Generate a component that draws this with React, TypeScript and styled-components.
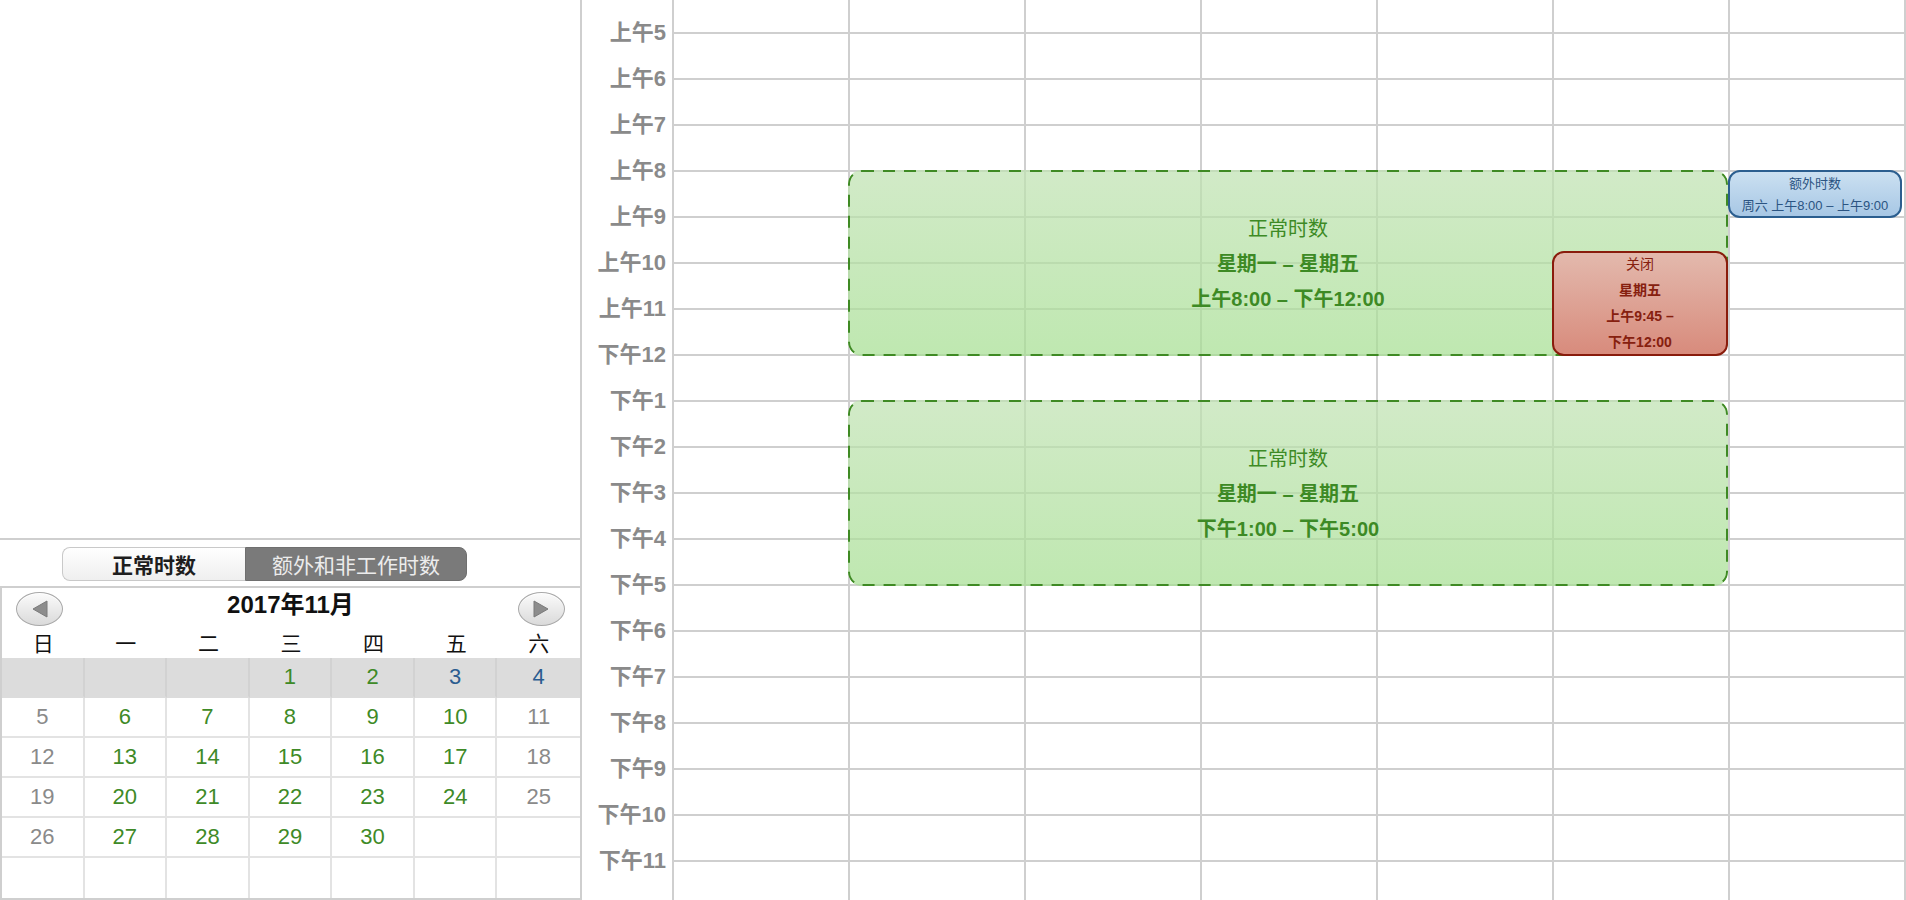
import React from "react";
import styled, { createGlobalStyle, css } from "styled-components";

const HOUR_H = 46;
const FIRST_LINE = 33;
const COL_W = 176;

const GlobalStyle = createGlobalStyle`
  html, body {
    margin: 0;
    padding: 0;
    background: #fff;
  }
  body {
    font-family: "Liberation Sans", "Noto Sans CJK SC", sans-serif;
    overflow: hidden;
  }
  * {
    box-sizing: border-box;
  }
`;

const hourLabels = [
  "上午5", "上午6", "上午7", "上午8", "上午9", "上午10", "上午11", "下午12",
  "下午1", "下午2", "下午3", "下午4", "下午5", "下午6", "下午7", "下午8",
  "下午9", "下午10", "下午11",
];

type DayTone = "off" | "work" | "extra";
type Day = { n?: number; tone?: DayTone };

const g = (n: number): Day => ({ n, tone: "work" });
const o = (n: number): Day => ({ n, tone: "off" });
const b = (n: number): Day => ({ n, tone: "extra" });
const e: Day = {};

const weeks: Day[][] = [
  [e, e, e, g(1), g(2), b(3), b(4)],
  [o(5), g(6), g(7), g(8), g(9), g(10), o(11)],
  [o(12), g(13), g(14), g(15), g(16), g(17), o(18)],
  [o(19), g(20), g(21), g(22), g(23), g(24), o(25)],
  [o(26), g(27), g(28), g(29), g(30), e, e],
  [e, e, e, e, e, e, e],
];

type Kind = "normal" | "closed" | "extra";
type CalEvent = {
  kind: Kind;
  day: number;
  span: number;
  from: number;
  to: number;
  lines: { text: string; bold?: boolean }[];
};

const events: CalEvent[] = [
  {
    kind: "normal",
    day: 1,
    span: 5,
    from: 8,
    to: 12,
    lines: [
      { text: "正常时数" },
      { text: "星期一 – 星期五", bold: true },
      { text: "上午8:00 – 下午12:00", bold: true },
    ],
  },
  {
    kind: "normal",
    day: 1,
    span: 5,
    from: 13,
    to: 17,
    lines: [
      { text: "正常时数" },
      { text: "星期一 – 星期五", bold: true },
      { text: "下午1:00 – 下午5:00", bold: true },
    ],
  },
  {
    kind: "closed",
    day: 5,
    span: 1,
    from: 9.75,
    to: 12,
    lines: [
      { text: "关闭" },
      { text: "星期五", bold: true },
      { text: "上午9:45 –", bold: true },
      { text: "下午12:00", bold: true },
    ],
  },
  {
    kind: "extra",
    day: 6,
    span: 1,
    from: 8,
    to: 9,
    lines: [{ text: "额外时数" }, { text: "周六 上午8:00 – 上午9:00" }],
  },
];

// ---------- left panel ----------

const Page = styled.div`
  display: flex;
  width: 1906px;
  height: 900px;
  overflow: hidden;
`;

const SidePanel = styled.div`
  width: 582px;
  flex-shrink: 0;
  display: flex;
  flex-direction: column;
  border-right: 2px solid #cfcfcf;
`;

const Blank = styled.div`
  flex: 1;
`;

const SwitchBar = styled.div`
  display: flex;
  border-top: 2px solid #cfcfcf;
  padding: 7px 0 5px 62px;
`;

const Segment = styled.div<{ $active?: boolean; $width: number }>`
  width: ${(p) => p.$width}px;
  height: 34px;
  display: flex;
  align-items: center;
  justify-content: center;
  font-size: 21px;
  ${(p) =>
    p.$active
      ? css`
          background: linear-gradient(#ffffff, #efefef);
          border: 1px solid #c9c9c9;
          border-right: none;
          border-radius: 8px 0 0 8px;
          color: #1e1e1e;
          font-weight: bold;
        `
      : css`
          background: #7a7a7a;
          border: 1px solid #6f6f6f;
          border-radius: 0 8px 8px 0;
          color: #ececec;
        `}
`;

const MiniCalendar = styled.div`
  border: 2px solid #cfcfcf;
  border-right: none;
`;

const CalHeader = styled.div`
  height: 38px;
  display: flex;
  align-items: flex-start;
  justify-content: space-between;
  padding: 4px 15px 0 14px;
`;

const CalTitle = styled.div`
  font-size: 24px;
  font-weight: bold;
  color: #111;
  line-height: 28px;
  margin-top: -1px;
`;

const NavButton = styled.div`
  width: 47px;
  height: 34px;
  border-radius: 50%;
  border: 1px solid #a8a8a8;
  background: linear-gradient(#fbfbfb, #dadada);
  box-shadow: inset 0 1px 0 #fff;
  display: flex;
  align-items: center;
  justify-content: center;
`;

const WeekHead = styled.div`
  height: 32px;
  display: grid;
  grid-template-columns: repeat(7, 1fr);
  align-items: center;
  text-align: center;
  font-size: 21px;
  color: #111;
`;

const DayGrid = styled.div`
  display: grid;
  grid-template-columns: repeat(7, 1fr);
  grid-auto-rows: 40px;
`;

const toneColor: Record<DayTone, string> = {
  off: "#8a8a8a",
  work: "#3e8a27",
  extra: "#2b5c90",
};

const DayCell = styled.div<{ $shaded?: boolean; $last?: boolean; $lastRow?: boolean; $tone?: DayTone }>`
  display: flex;
  align-items: center;
  justify-content: center;
  font-size: 22px;
  color: ${(p) => (p.$tone ? toneColor[p.$tone] : "#888")};
  background: ${(p) => (p.$shaded ? "#dcdcdc" : "#fff")};
  border-right: ${(p) => (p.$last ? "none" : `2px solid ${p.$shaded ? "#d2d2d2" : "#e3e3e3"}`)};
  border-bottom: ${(p) => (p.$lastRow ? "none" : `2px solid ${p.$shaded ? "#dcdcdc" : "#e3e3e3"}`)};
`;

// ---------- week grid ----------

const Schedule = styled.div`
  flex: 1;
  display: flex;
`;

const TimeColumn = styled.div`
  width: 92px;
  flex-shrink: 0;
  border-right: 2px solid #cfcfcf;
  padding-top: ${FIRST_LINE - HOUR_H / 2}px;
`;

const TimeLabel = styled.div`
  height: ${HOUR_H}px;
  line-height: ${HOUR_H}px;
  text-align: right;
  padding-right: 6px;
  font-size: 22px;
  font-weight: bold;
  color: #8a8a8a;
  white-space: nowrap;
`;

const DayArea = styled.div`
  flex: 1;
  display: flex;
  position: relative;
  overflow: hidden;
`;

const DayColumn = styled.div`
  width: ${COL_W}px;
  flex-shrink: 0;
  display: flex;
  flex-direction: column;
  border-right: 2px solid #cfcfcf;
`;

const HourCell = styled.div<{ $first?: boolean }>`
  height: ${(p) => (p.$first ? FIRST_LINE + 1 : HOUR_H)}px;
  flex-shrink: 0;
  border-bottom: 2px solid #cfcfcf;
`;

const kindStyles: Record<Kind, ReturnType<typeof css>> = {
  normal: css`
    background: linear-gradient(rgba(192, 226, 178, 0.72), rgba(166, 223, 146, 0.72));
    border-radius: 14px;
    color: #3d8a25;
    font-size: 20px;
    line-height: 35px;
    padding-top: 2px;
  `,
  closed: css`
    background: linear-gradient(#e3b9ad, #d88b7c);
    border: 2px solid #891c0c;
    border-radius: 12px;
    color: #86200f;
    font-size: 14px;
    line-height: 26px;
  `,
  extra: css`
    background: linear-gradient(#cbe0f1, #a7c7e5);
    border: 2px solid #2b5e8f;
    border-radius: 12px;
    color: #2b5482;
    font-size: 13px;
    line-height: 22px;
    padding-top: 2px;
  `,
};

const EventBlock = styled.div<{ $kind: Kind }>`
  position: absolute;
  display: flex;
  flex-direction: column;
  align-items: center;
  justify-content: center;
  text-align: center;
  white-space: nowrap;
  overflow: hidden;
  ${(p) => kindStyles[p.$kind]}
`;

const DashedOutline = styled.svg`
  position: absolute;
  inset: 0;
  pointer-events: none;
`;

const EventLine = styled.div<{ $bold?: boolean }>`
  position: relative;
  font-weight: ${(p) => (p.$bold ? "bold" : "normal")};
`;

const ArrowIcon: React.FC<{ dir: "left" | "right" }> = ({ dir }) => (
  <svg width="18" height="20" viewBox="0 0 18 20">
    <path
      d={dir === "left" ? "M2 10 L16 2 L16 18 Z" : "M16 10 L2 2 L2 18 Z"}
      fill="#8d8d8d"
      stroke="#7a7a7a"
      strokeWidth="1"
      strokeLinejoin="round"
    />
  </svg>
);

const lineY = (h: number) => FIRST_LINE + (h - 5) * HOUR_H;

const App: React.FC = () => {
  return (
    <Page>
      <GlobalStyle />
      <SidePanel>
        <Blank />
        <SwitchBar>
          <Segment $active $width={183}>正常时数</Segment>
          <Segment $width={222}>额外和非工作时数</Segment>
        </SwitchBar>
        <MiniCalendar>
          <CalHeader>
            <NavButton>
              <ArrowIcon dir="left" />
            </NavButton>
            <CalTitle>2017年11月</CalTitle>
            <NavButton>
              <ArrowIcon dir="right" />
            </NavButton>
          </CalHeader>
          <WeekHead>
            {["日", "一", "二", "三", "四", "五", "六"].map((d) => (
              <div key={d}>{d}</div>
            ))}
          </WeekHead>
          <DayGrid>
            {weeks.map((week, wi) =>
              week.map((day, di) => (
                <DayCell
                  key={`${wi}-${di}`}
                  $shaded={wi === 0}
                  $last={di === 6}
                  $lastRow={wi === weeks.length - 1}
                  $tone={day.tone}
                >
                  {day.n}
                </DayCell>
              ))
            )}
          </DayGrid>
        </MiniCalendar>
      </SidePanel>

      <Schedule>
        <TimeColumn>
          {hourLabels.map((l) => (
            <TimeLabel key={l}>{l}</TimeLabel>
          ))}
        </TimeColumn>
        <DayArea>
          {Array.from({ length: 7 }).map((_, c) => (
            <DayColumn key={c}>
              <HourCell $first />
              {Array.from({ length: 19 }).map((__, r) => (
                <HourCell key={r} />
              ))}
            </DayColumn>
          ))}
          {events.map((ev, i) => {
            const top = lineY(ev.from) - 1;
            const bottom = lineY(ev.to) + 1;
            const width = ev.kind === "extra" ? COL_W - 2 : COL_W * ev.span;
            const height = bottom - top;
            return (
              <EventBlock
                key={i}
                $kind={ev.kind}
                style={{ left: COL_W * ev.day - 2, top, width, height }}
              >
                {ev.kind === "normal" && (
                  <DashedOutline width={width} height={height}>
                    <rect
                      x="1"
                      y="1"
                      width={width - 2}
                      height={height - 2}
                      rx="13"
                      fill="none"
                      stroke="#3f8a24"
                      strokeWidth="2"
                      strokeDasharray="12 9"
                    />
                  </DashedOutline>
                )}
                {ev.lines.map((ln, j) => (
                  <EventLine key={j} $bold={ln.bold}>
                    {ln.text}
                  </EventLine>
                ))}
              </EventBlock>
            );
          })}
        </DayArea>
      </Schedule>
    </Page>
  );
};

export default App;
